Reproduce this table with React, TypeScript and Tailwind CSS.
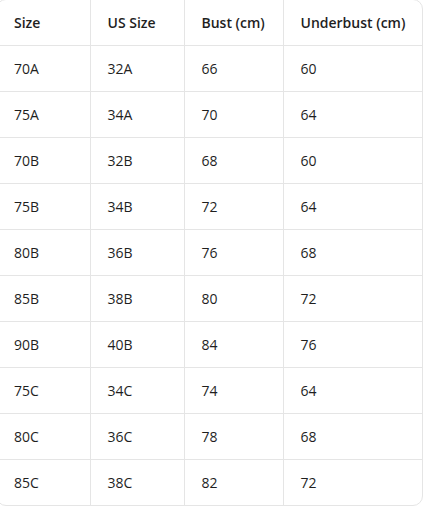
const rows = [
  ["70A", "32A", "66", "60"],
  ["75A", "34A", "70", "64"],
  ["70B", "32B", "68", "60"],
  ["75B", "34B", "72", "64"],
  ["80B", "36B", "76", "68"],
  ["85B", "38B", "80", "72"],
  ["90B", "40B", "84", "76"],
  ["75C", "34C", "74", "64"],
  ["80C", "36C", "78", "68"],
  ["85C", "38C", "82", "72"],
];

const headers = ["Size", "US Size", "Bust (cm)", "Underbust (cm)"];

export default function App() {
  return (
    <div className="w-[424px] h-[516px] overflow-hidden bg-white font-['Open_Sans','Noto_Sans',sans-serif] text-[14px] text-[#1f1f1f]">
      <div className="ml-[-4px] mt-[-1px] w-[427px] border border-[#e5e5e5] rounded-[10px] overflow-hidden">
        <table className="w-full table-fixed border-collapse">
          <colgroup>
            <col className="w-[93px]" />
            <col className="w-[94px]" />
            <col className="w-[99px]" />
            <col />
          </colgroup>
          <thead>
            <tr className="h-[45px]">
              {headers.map((h, i) => (
                <th
                  key={h}
                  className={`text-left font-semibold pl-[17px] border-b border-[#e5e5e5] ${i < 3 ? "border-r" : ""}`}
                >
                  {h}
                </th>
              ))}
            </tr>
          </thead>
          <tbody>
            {rows.map((r, ri) => (
              <tr key={ri} className="h-[46px]">
                {r.map((c, i) => (
                  <td
                    key={i}
                    className={`pl-[17px] border-[#e5e5e5] ${ri < rows.length - 1 ? "border-b" : ""} ${i < 3 ? "border-r" : ""}`}
                  >
                    {c}
                  </td>
                ))}
              </tr>
            ))}
          </tbody>
        </table>
      </div>
    </div>
  );
}
